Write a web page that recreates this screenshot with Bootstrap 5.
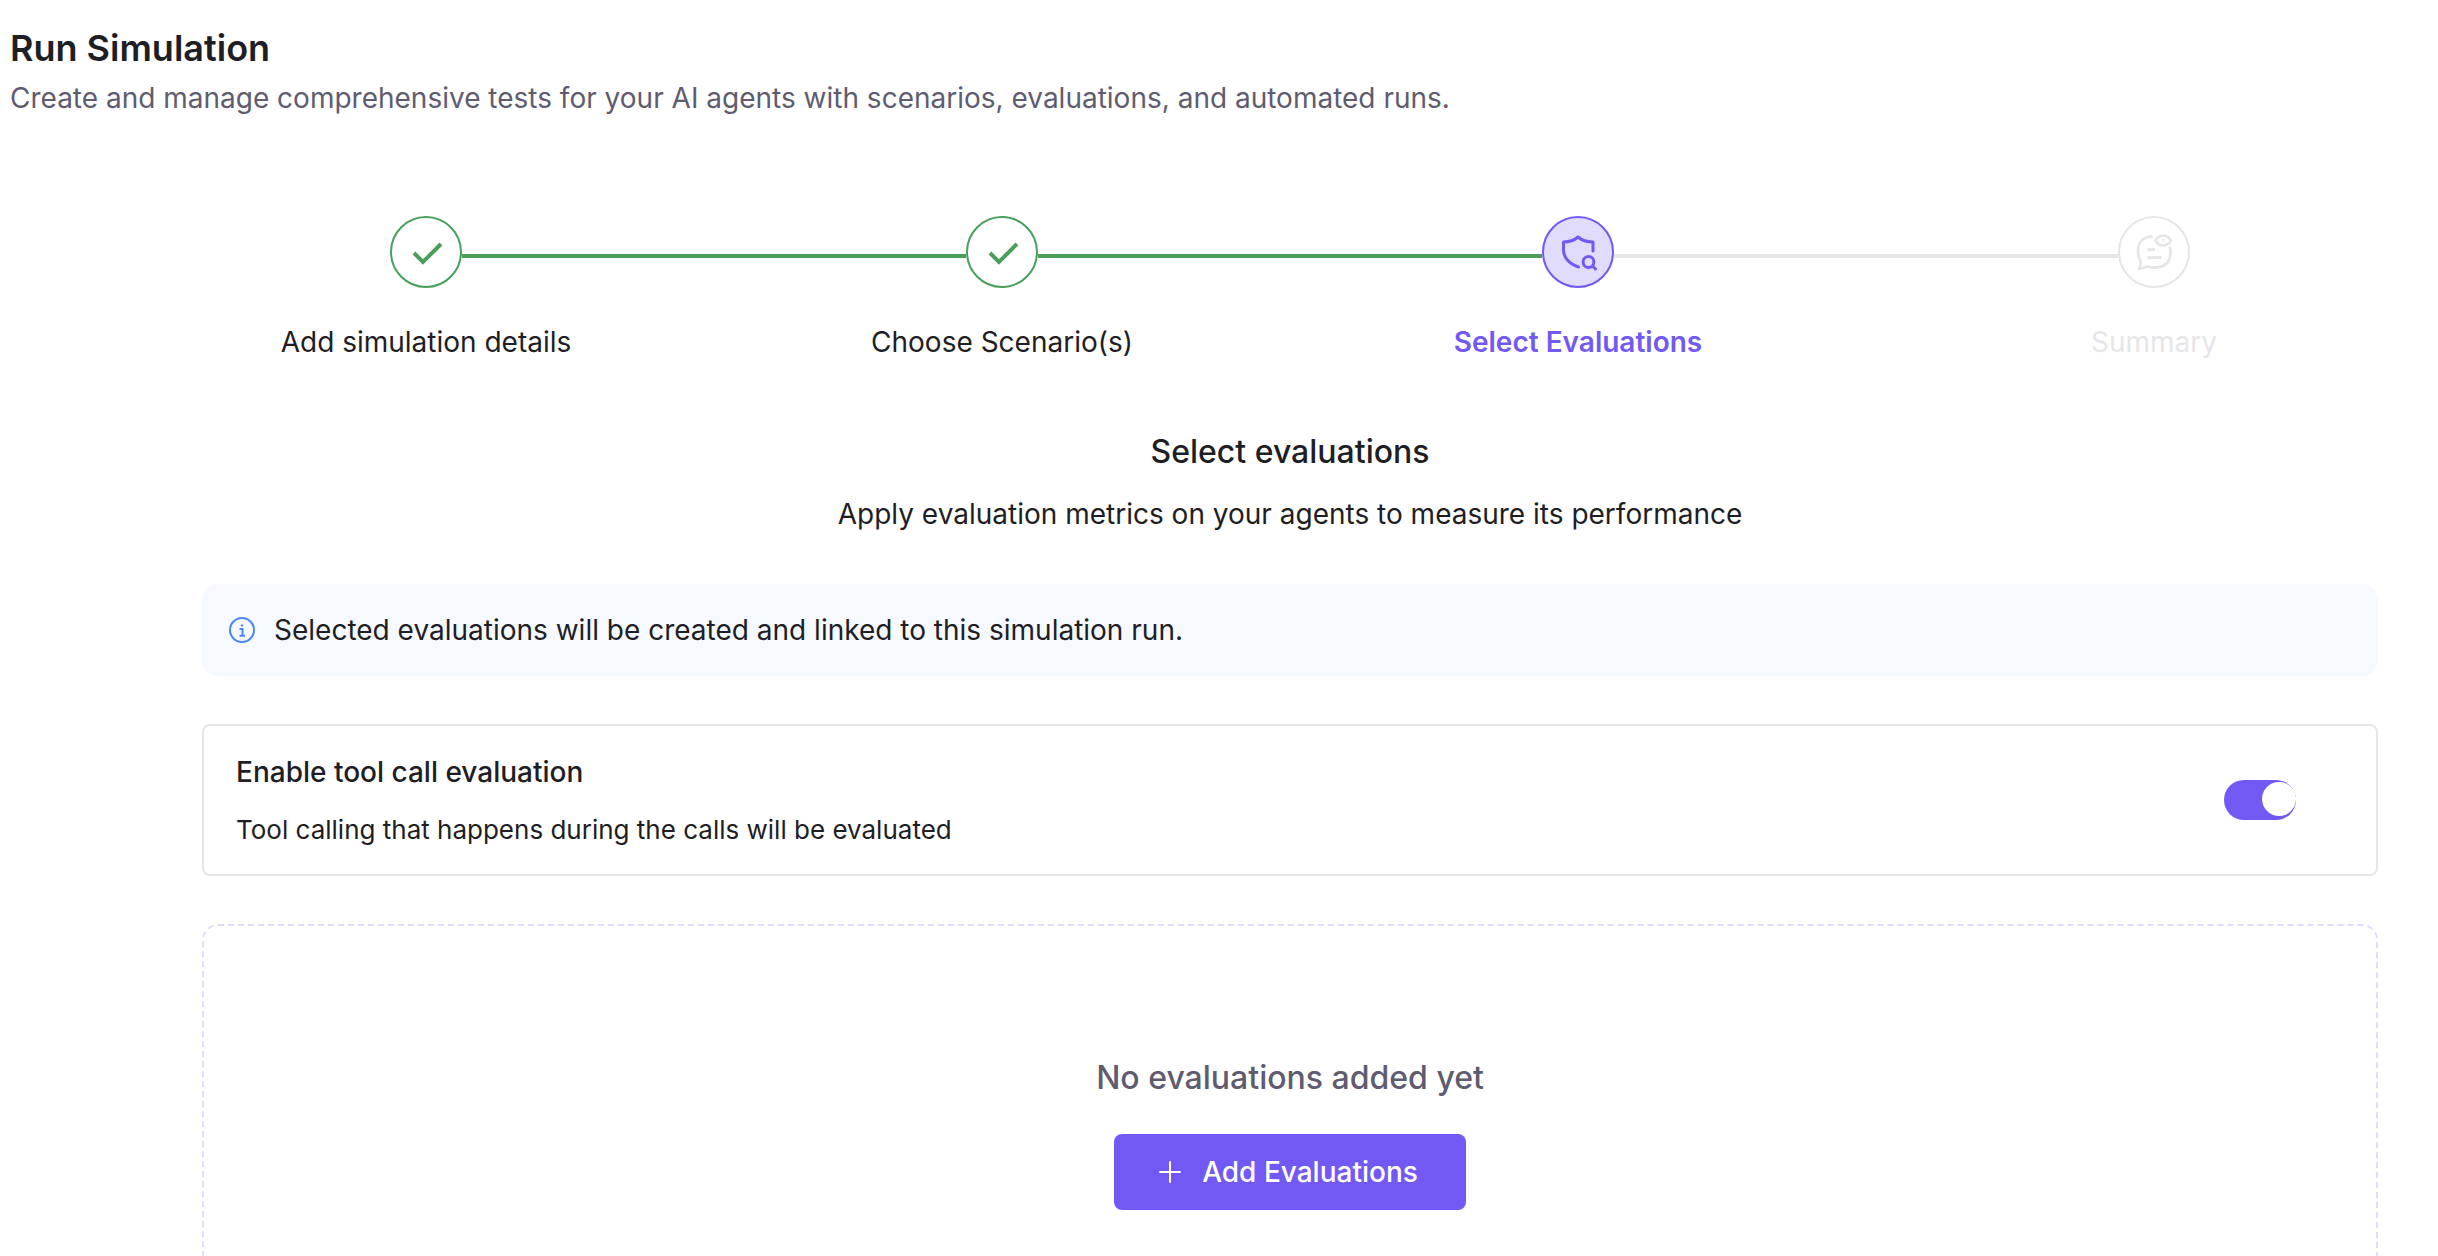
<!DOCTYPE html>
<html lang="en">
<head>
<meta charset="utf-8">
<meta name="viewport" content="width=device-width, initial-scale=1">
<title>Run Simulation</title>
<link href="https://cdn.jsdelivr.net/npm/bootstrap@5.3.0/dist/css/bootstrap.min.css" rel="stylesheet">
<style>
  :root { --violet: #7359f4; --ink: #1e1e24; --muted-ink: #605c70; --done: #48a05a; --idle: #e6e6e8; --lilac: #e1dcfc; }
  body { font-family: Inter, sans-serif; font-size: 28px; line-height: 44px; color: var(--ink); background: #fff; }
  .page-head { padding: 20px 10px 0; }
  .page-title { font-size: 36px; line-height: 56px; font-weight: 600; }
  .soft-text { color: var(--muted-ink); }
  .page-body { padding: 96px 60px 48px 202px; }
  .stepper { margin: 0 -64px 64px; }
  .step-track { height: 72px; }
  .step-line { height: 4px; margin-top: 8px; }
  .line-done { background: var(--done); }
  .line-idle { background: var(--idle); }
  .step-dot { width: 72px; height: 72px; border: 2px solid var(--idle); color: var(--idle); }
  .is-done .step-dot { border-color: var(--done); color: var(--done); }
  .is-active .step-dot { border-color: var(--violet); color: var(--violet); background: var(--lilac); }
  .step-label { margin-top: 32px; }
  .is-active .step-label { color: var(--violet); font-weight: 600; }
  .is-idle .step-label { color: var(--idle); }
  .section-title { font-size: 32px; line-height: 48px; font-weight: 500; }
  .stack { gap: 48px; }
  .notice { background: #f6f9ff; border-radius: 16px; padding: 24px 26px; gap: 18px; }
  .tool-panel { border: 2px solid var(--idle); border-radius: 8px; padding: 24px 80px 24px 32px; }
  .tool-title { font-weight: 500; }
  .tool-note { font-size: 26px; line-height: 40px; }
  .form-switch .tool-switch { width: 72px; height: 40px; border: 0; background-size: 38px 38px; box-shadow: none; }
  .form-switch .tool-switch:checked { background-color: var(--violet); background-position: right -2px center;
    background-image: url("data:image/svg+xml,%3csvg xmlns='http://www.w3.org/2000/svg' viewBox='0 0 38 38'%3e%3ccircle cx='19' cy='18' r='17' fill='%23fff'/%3e%3c/svg%3e"); }
  .empty-panel { border: 2px dashed var(--lilac); border-radius: 16px; padding: 128px 32px; gap: 32px; }
  .btn-violet { --bs-btn-bg: var(--violet); --bs-btn-color: #fff; --bs-btn-hover-bg: #6248e4; --bs-btn-hover-color: #fff; --bs-btn-active-bg: #563cd6; --bs-btn-active-color: #fff;
    --bs-btn-border-width: 0; font-size: 28px; line-height: 44px; font-weight: 500; border-radius: 8px; padding: 16px 48px 16px 44px; gap: 20px; }
</style>
</head>
<body>
<main class="vh-100 overflow-hidden">
  <header class="page-head">
    <h1 class="page-title mb-0">Run Simulation</h1>
    <p class="soft-text mb-0">Create and manage comprehensive tests for your AI agents with scenarios, evaluations, and automated runs.</p>
  </header>

  <div class="page-body">
    <ol class="stepper list-unstyled d-flex text-center">
      <li class="is-done flex-fill w-25">
        <div class="step-track d-flex align-items-center">
          <span class="step-line flex-grow-1"></span>
          <span class="step-dot rounded-circle d-flex align-items-center justify-content-center flex-shrink-0">
            <svg width="40" height="40" viewBox="0 0 40 40" fill="none" stroke="currentColor" stroke-width="4" aria-hidden="true"><path d="M8 21l9 9 18-18"/></svg>
          </span>
          <span class="step-line line-done flex-grow-1"></span>
        </div>
        <div class="step-label">Add simulation details</div>
      </li>
      <li class="is-done flex-fill w-25">
        <div class="step-track d-flex align-items-center">
          <span class="step-line line-done flex-grow-1"></span>
          <span class="step-dot rounded-circle d-flex align-items-center justify-content-center flex-shrink-0">
            <svg width="40" height="40" viewBox="0 0 40 40" fill="none" stroke="currentColor" stroke-width="4" aria-hidden="true"><path d="M8 21l9 9 18-18"/></svg>
          </span>
          <span class="step-line line-done flex-grow-1"></span>
        </div>
        <div class="step-label">Choose Scenario(s)</div>
      </li>
      <li class="is-active flex-fill w-25" aria-current="step">
        <div class="step-track d-flex align-items-center">
          <span class="step-line line-done flex-grow-1"></span>
          <span class="step-dot rounded-circle d-flex align-items-center justify-content-center flex-shrink-0">
            <svg width="40" height="40" viewBox="0 0 40 40" fill="none" stroke="currentColor" stroke-width="3" stroke-linecap="round" stroke-linejoin="round" aria-hidden="true"><path d="M20.500 35C11 32 5.500 25 5.500 18V10C11 10 16 8.500 20 5C24 8.500 29 10 35 10V19"/><circle cx="30.500" cy="30" r="5.400"/><path d="M34.500 34l3 3"/></svg>
          </span>
          <span class="step-line line-idle flex-grow-1"></span>
        </div>
        <div class="step-label">Select Evaluations</div>
      </li>
      <li class="is-idle flex-fill w-25">
        <div class="step-track d-flex align-items-center">
          <span class="step-line line-idle flex-grow-1"></span>
          <span class="step-dot rounded-circle d-flex align-items-center justify-content-center flex-shrink-0">
            <svg width="40" height="40" viewBox="0 0 40 40" fill="none" stroke="currentColor" stroke-width="2.800" stroke-linecap="round" stroke-linejoin="round" aria-hidden="true"><path d="M17.500 4.500C9 5 4 10.500 4 19C4 23 4.500 26 6.500 29C7 32 6.500 34 5 36.500C9 36.500 11 35.500 13 34.500C15 35.300 17 35.500 20 35.500C31 35.500 36.500 30 36.500 20C36.500 18.500 36.400 17.500 36 16"/><path d="M21.500 8.500C25 2 33 2 37 8.500C33 15 25 15 21.500 8.500Z"/><circle cx="29.300" cy="8.500" r=".4"/><path d="M14.500 17.500H20M14.500 25.500H26.500"/></svg>
          </span>
          <span class="step-line flex-grow-1"></span>
        </div>
        <div class="step-label">Summary</div>
      </li>
    </ol>

    <div class="text-center mb-5">
      <h2 class="section-title mb-3">Select evaluations</h2>
      <p class="mb-0">Apply evaluation metrics on your agents to measure its performance</p>
    </div>

    <div class="stack d-flex flex-column">
      <div class="notice d-flex align-items-center" role="status">
        <svg class="flex-shrink-0" width="28" height="28" viewBox="0 0 28 28" fill="none" stroke="#4c86f0" stroke-width="2" aria-hidden="true"><circle cx="14" cy="14" r="12"/><path d="M11.500 13H14.500V19.500M11.500 19.800H17" /><circle cx="14" cy="9.500" r=".8" fill="#4c86f0" stroke-width="1"/></svg>
        <span>Selected evaluations will be created and linked to this simulation run.</span>
      </div>

      <section class="tool-panel d-flex align-items-center justify-content-between">
        <div>
          <label class="tool-title d-block mb-3" for="toolEval">Enable tool call evaluation</label>
          <p class="tool-note mb-0" id="toolEvalNote">Tool calling that happens during the calls will be evaluated</p>
        </div>
        <div class="form-check form-switch d-flex p-0 m-0">
          <input class="tool-switch form-check-input m-0" type="checkbox" role="switch" id="toolEval" aria-describedby="toolEvalNote" checked>
        </div>
      </section>

      <section class="empty-panel d-flex flex-column align-items-center">
        <h3 class="section-title soft-text mb-0">No evaluations added yet</h3>
        <button type="button" class="btn btn-violet d-flex align-items-center">
          <svg width="24" height="24" viewBox="0 0 24 24" fill="none" stroke="currentColor" stroke-width="2" stroke-linecap="round" aria-hidden="true"><path d="M12 2v20M2 12h20"/></svg>
          Add Evaluations
        </button>
      </section>
    </div>
  </div>
</main>
<script src="https://cdn.jsdelivr.net/npm/bootstrap@5.3.0/dist/js/bootstrap.bundle.min.js"></script>
</body>
</html>
